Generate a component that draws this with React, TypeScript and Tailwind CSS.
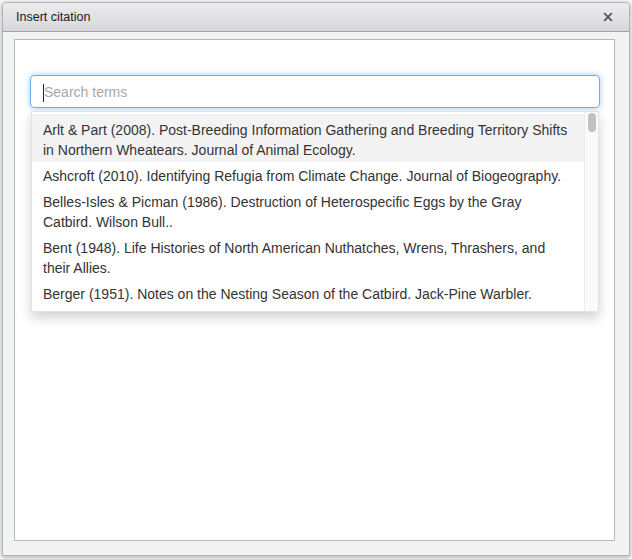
const citations = [
  'Arlt & Part (2008). Post-Breeding Information Gathering and Breeding Territory Shifts in Northern Wheatears. Journal of Animal Ecology.',
  'Ashcroft (2010). Identifying Refugia from Climate Change. Journal of Biogeography.',
  'Belles-Isles & Picman (1986). Destruction of Heterospecific Eggs by the Gray Catbird. Wilson Bull..',
  'Bent (1948). Life Histories of North American Nuthatches, Wrens, Thrashers, and their Allies.',
  'Berger (1951). Notes on the Nesting Season of the Catbird. Jack-Pine Warbler.',
];

export default function App() {
  return (
    <div className="w-[632px] h-[559px] bg-[#f7f7f7] overflow-hidden pt-[2px] pl-[2px] font-['Helvetica_Neue','Liberation_Sans',Arial,sans-serif]">
      <div className="w-[628px] h-[554px] flex flex-col bg-[#f2f3f3] border border-[#b4b4b4] rounded-t-[4px] shadow-[0_1px_4px_rgba(0,0,0,0.35)]">
        <div className="h-[29px] shrink-0 flex items-center justify-between pl-[13px] pr-[16px] bg-gradient-to-b from-[#ececee] to-[#d8d8da] border-b border-[#a3a3a3] rounded-t-[4px]">
          <span className="text-[12.5px] text-[#1a1a1a]">Insert citation</span>
          <svg width="10" height="10" viewBox="0 0 10 10">
            <path d="M1.2 1.2L8.8 8.8M8.8 1.2L1.2 8.8" stroke="#555" strokeWidth="1.8" />
          </svg>
        </div>
        <div className="flex-1 pt-[7px] pl-[11px] pr-[14px] pb-[14px]">
          <div className="h-full bg-white border border-[#b8b8b8] pt-[35px] pl-[15px] pr-[15px]">
            <div className="relative">
              <div className="h-[33px] w-[570px] rounded-[4px] border border-[#66afe9] shadow-[0_0_6px_rgba(102,175,233,0.6)] flex items-center pl-[12px] pt-[2px] text-[14px]">
                <span className="w-px h-[18px] bg-[#222]" />
                <span className="text-[#a8a8a8]">Search terms</span>
              </div>
              <div className="absolute left-[1px] top-[36px] w-[568px] h-[201px] bg-white border border-[#e2e2e2] rounded-b-[3px] shadow-[0_6px_12px_rgba(0,0,0,0.18)] flex">
                <div className="flex-1 pt-[2px] text-[14px] leading-[20px] text-[#333]">
                  {citations.map((c, i) => (
                    <div key={i} className={`px-[11px] pt-[4px] pb-[2px] ${i === 0 ? 'bg-[#f3f3f3] pt-[6px]' : ''}`}>
                      {c}
                    </div>
                  ))}
                </div>
                <div className="w-[14px] shrink-0 border-l border-[#ececec] bg-[#fafafa] pt-[1px] flex justify-center">
                  <div className="w-[8px] h-[19px] rounded-full bg-[#c1c1c1]" />
                </div>
              </div>
            </div>
          </div>
        </div>
      </div>
    </div>
  );
}
